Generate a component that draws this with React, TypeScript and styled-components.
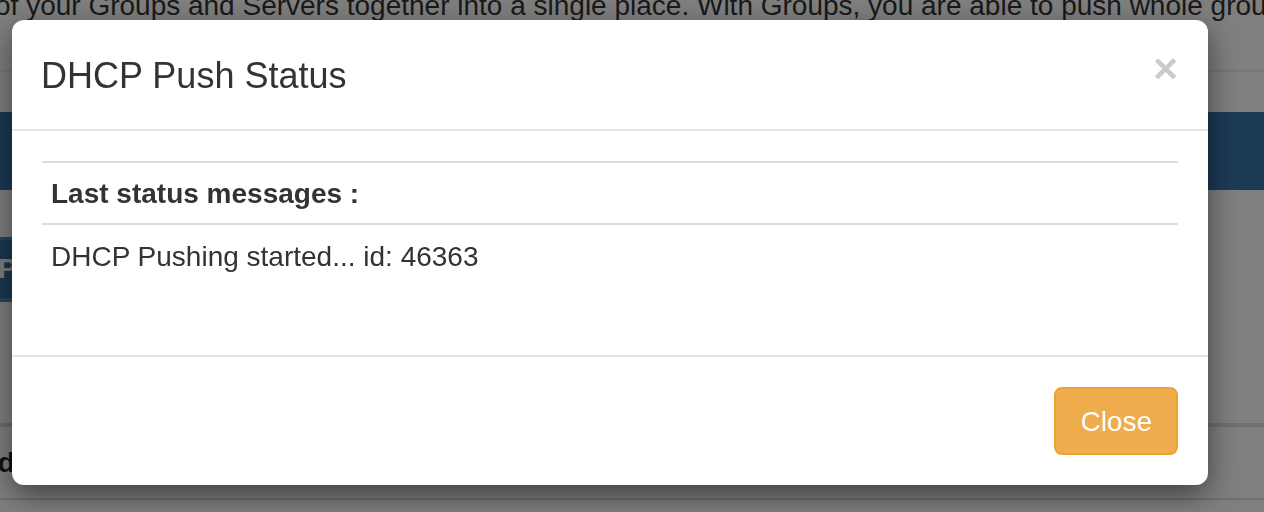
import React from "react";
import styled, { createGlobalStyle } from "styled-components";

const GlobalStyle = createGlobalStyle`
  html, body {
    margin: 0;
    padding: 0;
    background: #fff;
    overflow: hidden;
  }
  body {
    font-family: "Liberation Sans", Helvetica, Arial, sans-serif;
    color: #333;
  }
`;

/* ---- page behind the modal ---- */

const Page = styled.div`
  height: 512px;
  overflow: hidden;
`;

const Lead = styled.p`
  margin: -14px 0 0 -5px;
  font-size: 28px;
  line-height: 40px;
  white-space: nowrap;
`;

const Divider = styled.hr`
  margin: 44px 0 0;
  border: 0;
  border-top: 2px solid #eee;
`;

const Banner = styled.div`
  margin-top: 40px;
  height: 78px;
  background: #3a74ab;
`;

const ActionBar = styled.div`
  padding-top: 47px;
  display: flex;
`;

const PrimaryButton = styled.button`
  height: 65px;
  padding: 0 24px;
  margin-left: -26px;
  border: 0;
  border-top: 3px solid #4f88c0;
  border-bottom: 4px solid #4f88c0;
  background: #36709f;
  color: #fff;
  font: 700 28px "Liberation Sans", Arial, sans-serif;
`;

const GroupTable = styled.div`
  margin-top: 121px;
  border-top: 4px solid #ddd;
  border-bottom: 2px solid #ddd;
`;

const HeadCell = styled.div`
  padding: 16px 0 15px;
  margin-left: -10px;
  font-size: 28px;
  font-weight: 700;
  line-height: 40px;
  color: #222;
`;

/* ---- modal ---- */

const Backdrop = styled.div`
  position: fixed;
  inset: 0;
  background: rgba(0, 0, 0, 0.5);
`;

const ModalLayer = styled.div`
  position: fixed;
  inset: 0;
  padding: 20px 0 0 12px;
`;

const Dialog = styled.div`
  width: 1196px;
  background: #fff;
  border-radius: 12px;
  box-shadow: 0 10px 30px rgba(0, 0, 0, 0.5);
  overflow: hidden;
`;

const Header = styled.div`
  display: flex;
  justify-content: space-between;
  align-items: flex-start;
  padding: 30px 30px 28px 29px;
  border-bottom: 2px solid #e5e5e5;
`;

const Title = styled.h4`
  margin: 0;
  font-size: 36px;
  font-weight: 400;
  line-height: 51.4px;
  color: #333;
`;

const CloseX = styled.button`
  margin-top: -3px;
  padding: 0;
  border: 0;
  background: none;
  font: 700 43px/1 "Liberation Sans", Arial, sans-serif;
  color: #000;
  opacity: 0.2;
  text-shadow: 0 2px 0 #fff;
  cursor: pointer;
`;

const Body = styled.div`
  padding: 30px;
`;

const StatusTable = styled.table`
  width: 100%;
  border-collapse: collapse;
  margin-bottom: 40px;
  font-size: 28px;
  line-height: 40px;
  color: #333;

  th,
  td {
    text-align: left;
  }
  th {
    padding: 11px 10px 9px 9px;
    font-weight: 700;
    border-top: 2px solid #ddd;
    border-bottom: 2px solid #ddd;
  }
  td {
    padding: 12px 10px 8px 9px;
  }
`;

const Footer = styled.div`
  padding: 30px;
  border-top: 2px solid #e5e5e5;
  text-align: right;
`;

const WarningButton = styled.button`
  padding: 13px 24px 11px;
  border: 2px solid #eea236;
  border-radius: 8px;
  background: #f0ad4e;
  color: #fff;
  font: 400 28px/40px "Liberation Sans", Arial, sans-serif;
  cursor: pointer;
`;

export default function App() {
  return (
    <>
      <GlobalStyle />
      <Page>
        <Lead>
          of your Groups and Servers together into a single place. With Groups, you are able to push whole groups at
          once.
        </Lead>
        <Divider />
        <Banner />
        <ActionBar>
          <PrimaryButton>Push</PrimaryButton>
        </ActionBar>
        <GroupTable>
          <HeadCell>Id</HeadCell>
        </GroupTable>
      </Page>

      <Backdrop />
      <ModalLayer>
        <Dialog role="dialog">
          <Header>
            <Title>DHCP Push Status</Title>
            <CloseX aria-label="Close">×</CloseX>
          </Header>
          <Body>
            <StatusTable>
              <thead>
                <tr>
                  <th>Last status messages :</th>
                </tr>
              </thead>
              <tbody>
                <tr>
                  <td>DHCP Pushing started... id: 46363</td>
                </tr>
              </tbody>
            </StatusTable>
          </Body>
          <Footer>
            <WarningButton>Close</WarningButton>
          </Footer>
        </Dialog>
      </ModalLayer>
    </>
  );
}
